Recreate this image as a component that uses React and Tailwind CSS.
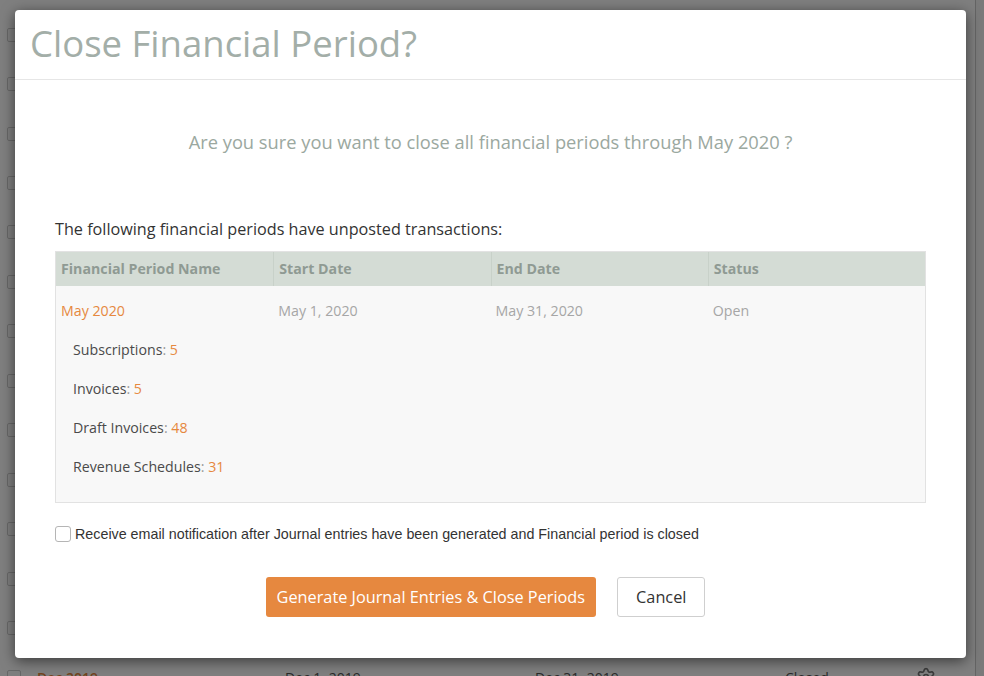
import { Settings } from 'lucide-react'

// rows of the page that sits behind the dialog; only the last one peeks out
const PAGE_ROWS = 14

const UNPOSTED = [
  { label: 'Subscriptions', count: 5 },
  { label: 'Invoices', count: 5 },
  { label: 'Draft Invoices', count: 48 },
  { label: 'Revenue Schedules', count: 31 },
]

const COLUMNS = ['Financial Period Name', 'Start Date', 'End Date', 'Status']

function PageBehind() {
  return (
    <div className="flex h-full bg-white">
      <div className="flex-1 pt-[10px]">
        {Array.from({ length: PAGE_ROWS }).map((_, i) => (
          <div key={i} className="flex items-center h-[49.45px] text-[14px] text-[#555]">
            <span className="ml-[7px] w-[14px] h-[14px] border border-[#d0d0d0] rounded-[2px] bg-white" />
            {i === PAGE_ROWS - 1 && (
              <>
                <span className="ml-[16px] w-[248px] text-[#e6883f] font-semibold">Dec 2019</span>
                <span className="w-[250px]">Dec 1, 2019</span>
                <span className="w-[250px]">Dec 31, 2019</span>
                <span className="w-[131px]">Closed</span>
                <Settings size={20} className="text-[#777]" />
              </>
            )}
          </div>
        ))}
      </div>
      <div className="w-[9px] border-l border-[#c8c8c8] bg-[#f4f4f4]" />
    </div>
  )
}

export default function App() {
  return (
    <div className="relative w-[984px] h-[676px] overflow-hidden" style={{ fontFamily: "'Open Sans', sans-serif" }}>
      <PageBehind />
      <div className="absolute inset-0 bg-black/50" />

      <div className="absolute left-[15px] top-[10px] w-[951px] h-[648px] bg-white rounded-[4px] shadow-[0_3px_14px_rgba(0,0,0,0.55)] flex flex-col">
        <div className="h-[70px] border-b border-[#e6e6e6] pl-[15px] flex items-center">
          <h1 className="text-[36.5px] text-[#a3aea8] leading-none pb-[3px]">Close Financial Period?</h1>
        </div>

        <div className="flex-1 px-[40px] flex flex-col">
          <p className="mt-[50px] text-center text-[18.3px] leading-[24px] text-[#9ba8a0]">
            Are you sure you want to close all financial periods through May 2020 ?
          </p>

          <p className="mt-[65px] text-[16.2px] leading-[21px] text-[#333]">
            The following financial periods have unposted transactions:
          </p>

          <div className="mt-[11px] border border-[#e2e2e2] bg-[#f8f8f8]">
            <div className="grid grid-cols-4 h-[34px] bg-[#d4dcd5]">
              {COLUMNS.map((c, i) => (
                <div key={c} className={`flex items-center px-[5px] text-[14.2px] font-bold text-[#8f9a93] ${i > 0 ? 'border-l border-[#c8d1c9]' : ''}`}>
                  {c}
                </div>
              ))}
            </div>
            <div className="pt-[16px] pb-[26px]">
              <div className="grid grid-cols-4 text-[14.2px] leading-[18px] text-[#a6a6a6]">
                <span className="px-[5px] text-[#e6883f]">May 2020</span>
                <span className="px-[5px]">May 1, 2020</span>
                <span className="px-[5px]">May 31, 2020</span>
                <span className="px-[5px]">Open</span>
              </div>
              <div className="pl-[17px] flex flex-col">
                {UNPOSTED.map(u => (
                  <div key={u.label} className="mt-[21px] text-[14.2px] leading-[18px] text-[#4a4a4a]">
                    {u.label}<span className="text-[#999]">:</span> <span className="text-[#e6883f]">{u.count}</span>
                  </div>
                ))}
              </div>
            </div>
          </div>

          <label className="mt-[22px] flex items-center gap-[4px] text-[14.3px] leading-[18px] text-[#333]" style={{ fontFamily: "'Liberation Sans', Arial, sans-serif" }}>
            <span className="w-[16px] h-[16px] border border-[#b5b5b5] rounded-[3px] bg-white" />
            Receive email notification after Journal entries have been generated and Financial period is closed
          </label>

          <div className="mt-[34px] flex justify-center gap-[21px] pr-[10px]">
            <button className="h-[40px] px-[11px] rounded-[3px] bg-[#e6883f] text-white text-[16.3px]">
              Generate Journal Entries &amp; Close Periods
            </button>
            <button className="h-[40px] px-[18px] rounded-[3px] bg-white border border-[#cfcfcf] text-[#333] text-[16.3px]">
              Cancel
            </button>
          </div>
        </div>
      </div>
    </div>
  )
}
